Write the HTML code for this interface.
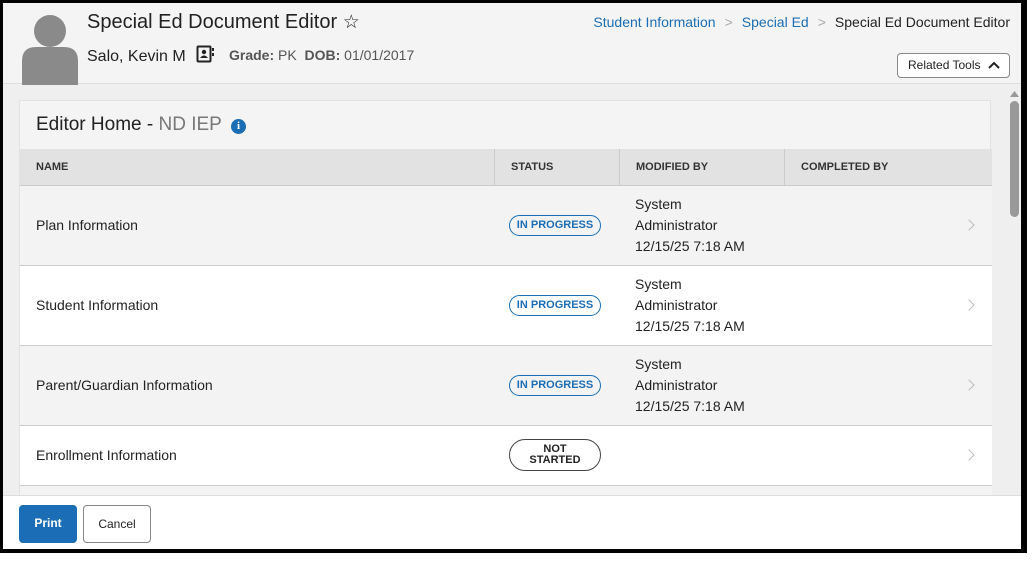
<!DOCTYPE html>
<html><head><meta charset="utf-8"><style>
*{box-sizing:border-box;margin:0;padding:0}
body{width:1032px;height:561px;background:#fff;font-family:"Liberation Sans",Arial,sans-serif;position:relative;overflow:hidden;color:#222}
.frame{position:absolute;left:0;top:0;width:1027px;height:553px;border-style:solid;border-color:#000;border-width:3px 6px 4px 3px;background:#efefef;overflow:hidden}
.hdr{position:absolute;left:0;top:0;width:1018px;height:81px;background:#f4f4f4;border-bottom:1px solid #ddd}
.av{position:absolute;left:19px;top:10px;width:56px;height:72px}
.t1{position:absolute;left:84px;top:8px;font-size:20px;color:#222}
.t2{position:absolute;left:84px;top:42px;font-size:16px;color:#222}
.meta{position:absolute;left:226px;top:44px;font-size:14px;color:#555}
.meta b{color:#555}
.bc{position:absolute;right:11px;top:11px;font-size:14px;color:#222}
.bc a{color:#1b6eb5;text-decoration:none}
.bc .s{color:#aaa;margin:0 9px}
.rt{position:absolute;left:894px;top:50px;width:113px;height:25px;border:1px solid #888;border-radius:4px;background:#fff;font-size:12px;line-height:23px;padding-left:10px;color:#222}
.card{position:absolute;left:16px;top:97px;width:972px;height:420px;background:#f4f4f4;border:1px solid #e2e2e2}
.ct{position:absolute;left:16px;top:13px;font-size:19px;color:#222}
.ct span{color:#777}
.info{position:absolute;left:211px;top:18px;width:15px;height:15px;border-radius:50%;background:#1b6eb5;color:#fff;font-size:11px;font-weight:bold;text-align:center;line-height:15px;font-family:"Liberation Serif",serif}
.th{position:absolute;left:0;top:48px;width:972px;height:37px;background:#e2e2e2;border-bottom:1px solid #ccc;font-size:11px;font-weight:bold;color:#333}
.th div{position:absolute;top:0;height:37px;line-height:36px;padding-left:16px;border-left:1px solid #ccc}
.row{position:absolute;left:0;width:972px;border-bottom:1px solid #ccc;font-size:14px;color:#222}
.row .n{position:absolute;left:16px}
.pill{position:absolute;left:489px;width:92px;height:21px;border:1px solid #1b6eb5;border-radius:11px;color:#1b6eb5;font-size:11px;font-weight:bold;text-align:center;line-height:19px}
.pill.ns{border-color:#444;color:#222;height:32px;line-height:11px;padding-top:4px;border-radius:16px}
.mod{position:absolute;left:615px;line-height:21px}
.chev{position:absolute;left:945px;width:8px;height:8px;border-right:1.5px solid #bbb;border-top:1.5px solid #bbb;transform:rotate(45deg)}
.foot{position:absolute;left:0;top:492px;width:1018px;height:54px;background:#fff;border-top:1px solid #ddd}
.btn{position:absolute;top:9px;height:38px;border-radius:4px;font-size:12px;line-height:36px;text-align:center}
.sb{position:absolute;left:1005px;top:84px;width:13px;height:408px;background:#efefef}
.thumb{position:absolute;left:2px;top:14px;width:9px;height:116px;background:#999;border-radius:5px}
</style></head><body>
<div class="frame">
<div class="hdr">
<svg class="av" viewBox="0 0 56 72"><circle cx="28" cy="18" r="16" fill="#8a8a8a"/><path d="M0 72V48q0-14 14-14h28q14 0 14 14v24z" fill="#8a8a8a"/></svg>
<div class="t1">Special Ed Document Editor <span style="font-size:19px">☆</span></div>
<div class="t2">Salo, Kevin M <svg width="18" height="18" viewBox="0 0 18 18" style="vertical-align:-2px;margin-left:6px"><rect x="1.5" y="1.5" width="13" height="15" rx="1" fill="none" stroke="#222" stroke-width="2"/><circle cx="8" cy="7" r="2.2" fill="#222"/><path d="M4 13q4-5 8 0z" fill="#222"/><rect x="16" y="3" width="2" height="3" fill="#222"/><rect x="16" y="8" width="2" height="3" fill="#222"/></svg></div>
<div class="meta"><b>Grade:</b> PK &nbsp;<b>DOB:</b> 01/01/2017</div>
<div class="bc"><a>Student Information</a><span class="s">&gt;</span><a>Special Ed</a><span class="s">&gt;</span>Special Ed Document Editor</div>
<div class="rt">Related Tools <svg width="12" height="8" viewBox="0 0 12 8" style="margin-left:4px;vertical-align:0"><path d="M1 7L6 2l5 5" fill="none" stroke="#222" stroke-width="2"/></svg></div>
</div>
<div class="card">
<div class="ct">Editor Home - <span>ND IEP</span></div>
<div class="info">i</div>
<div class="th"><div style="left:0;width:474px;border-left:0">NAME</div><div style="left:474px;width:125px">STATUS</div><div style="left:599px;width:165px">MODIFIED BY</div><div style="left:764px;width:208px">COMPLETED BY</div></div>
<div class="row" style="top:85px;height:80px;background:#f3f3f3"><div class="n" style="top:31px">Plan Information</div><div class="pill" style="top:29px">IN PROGRESS</div><div class="mod" style="top:8px">System<br>Administrator<br>12/15/25 7:18 AM</div><div class="chev" style="top:35px"></div></div>
<div class="row" style="top:165px;height:80px;background:#fff"><div class="n" style="top:31px">Student Information</div><div class="pill" style="top:29px">IN PROGRESS</div><div class="mod" style="top:8px">System<br>Administrator<br>12/15/25 7:18 AM</div><div class="chev" style="top:35px"></div></div>
<div class="row" style="top:245px;height:80px;background:#f3f3f3"><div class="n" style="top:31px">Parent/Guardian Information</div><div class="pill" style="top:29px">IN PROGRESS</div><div class="mod" style="top:8px">System<br>Administrator<br>12/15/25 7:18 AM</div><div class="chev" style="top:35px"></div></div>
<div class="row" style="top:325px;height:60px;background:#fff"><div class="n" style="top:21px">Enrollment Information</div><div class="pill ns" style="top:13px">NOT<br>STARTED</div><div class="chev" style="top:25px"></div></div>
<div class="row" style="top:385px;height:40px;background:#f3f3f3;border:0"></div>
</div>
<div class="sb"><svg width="13" height="10" viewBox="0 0 13 10" style="position:absolute;top:2px"><path d="M2 8l4.5-6 4.5 6z" fill="#999"/></svg><div class="thumb"></div></div>
<div class="foot">
<div class="btn" style="left:16px;width:58px;background:#1b6eb5;color:#fff;font-weight:bold">Print</div>
<div class="btn" style="left:80px;width:68px;border:1px solid #888;background:#fff;color:#222">Cancel</div>
</div>
</div>
</body></html>
